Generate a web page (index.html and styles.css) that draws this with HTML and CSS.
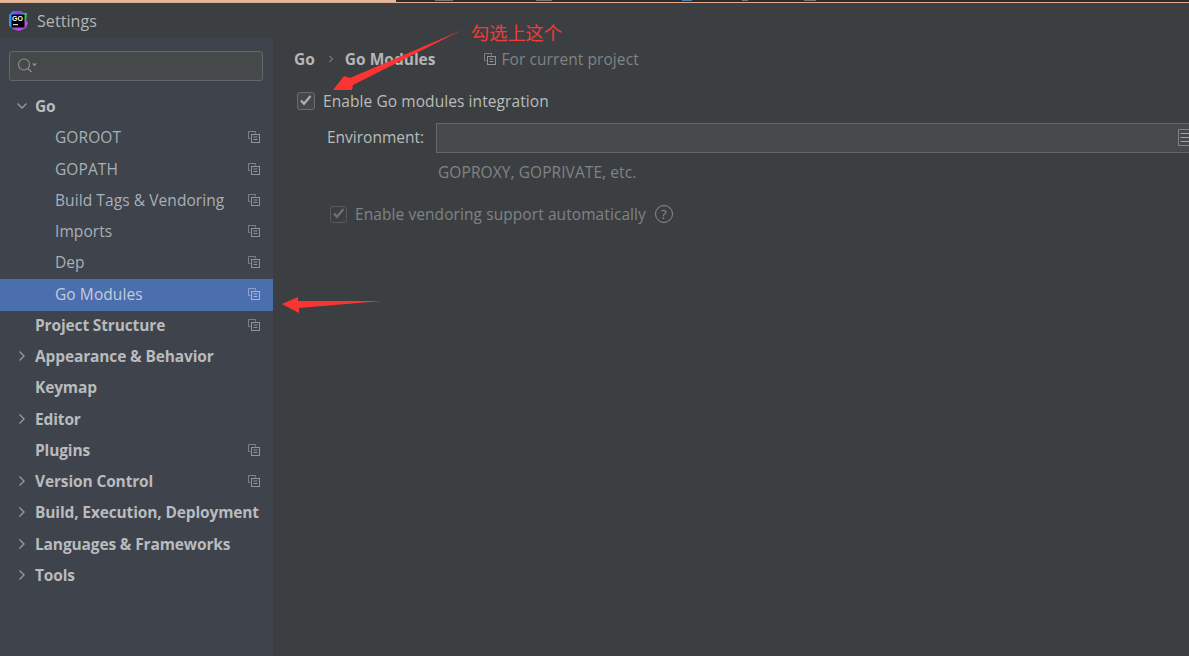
FILE: index.html
```html
<!DOCTYPE html>
<html lang="en">
<head>
<meta charset="utf-8">
<title>Settings</title>
<link rel="stylesheet" href="styles.css">
</head>
<body>
<svg width="0" height="0" class="defs">
  <symbol id="copy" viewBox="0 0 12 12">
    <path d="M7.500 2.500V.5H.5v7h2" fill="none" stroke="currentColor" stroke-opacity=".75"/>
    <rect x="3.500" y="3.500" width="8" height="8" fill="none" stroke="currentColor"/>
    <path d="M5.500 6h4M5.500 8.500h4" stroke="currentColor"/>
  </symbol>
  <symbol id="chev-d" viewBox="0 0 12 12"><path d="M1.500 3.500 6 8l4.500-4.500" fill="none" stroke="currentColor" stroke-width="1.300"/></symbol>
  <symbol id="chev-r" viewBox="0 0 12 12"><path d="M3.500 1.500 8 6l-4.500 4.500" fill="none" stroke="currentColor" stroke-width="1.300"/></symbol>
</svg>
<div class="topstrip"><div class="peach"></div><div class="dark"></div></div>
<header class="titlebar">
  <svg class="logo" width="20" height="20" viewBox="0 0 20 20">
    <path d="M5 0h9l2 4-2 5H6z" fill="#7b4bf0"/>
    <path d="M1 4l4-4 3 9-3 9-4-3z" fill="#2f9be8"/>
    <path d="M14 2h5l-1 8-3 2z" fill="#2fc46e"/>
    <path d="M18 9l2 3-2 5-7 3-7-2z" fill="#b44be0"/>
    <rect x="3.500" y="3.500" width="13" height="13" fill="#000"/>
    <text x="4" y="9.500" class="logo-text">GO</text>
    <rect x="5" y="13" width="5" height="1.200" fill="#ddd"/>
  </svg>
  <span class="title">Settings</span>
</header>
<div class="body">
  <aside class="sidebar">
    <div class="search">
      <svg width="22" height="16" viewBox="0 0 22 16">
        <circle cx="7" cy="6.500" r="5.500" fill="none" stroke="#8b8f92" stroke-width="1.100"/>
        <path d="M11 10.500l3.500 3.500" stroke="#8b8f92" stroke-width="1.300"/>
        <path d="M15 5.500h5l-2.500 3z" fill="#8b8f92"/>
      </svg>
    </div>
    <nav class="tree">
      <div class="row bold"><svg class="arrow"><use href="#chev-d"/></svg><span>Go</span></div>
      <div class="row child"><span>GOROOT</span><svg class="copy"><use href="#copy"/></svg></div>
      <div class="row child"><span>GOPATH</span><svg class="copy"><use href="#copy"/></svg></div>
      <div class="row child"><span>Build Tags &amp; Vendoring</span><svg class="copy"><use href="#copy"/></svg></div>
      <div class="row child"><span>Imports</span><svg class="copy"><use href="#copy"/></svg></div>
      <div class="row child"><span>Dep</span><svg class="copy"><use href="#copy"/></svg></div>
      <div class="row child selected"><span>Go Modules</span><svg class="copy"><use href="#copy"/></svg></div>
      <div class="row bold leaf"><span>Project Structure</span><svg class="copy"><use href="#copy"/></svg></div>
      <div class="row bold"><svg class="arrow"><use href="#chev-r"/></svg><span>Appearance &amp; Behavior</span></div>
      <div class="row bold leaf"><span>Keymap</span></div>
      <div class="row bold"><svg class="arrow"><use href="#chev-r"/></svg><span>Editor</span></div>
      <div class="row bold leaf"><span>Plugins</span><svg class="copy"><use href="#copy"/></svg></div>
      <div class="row bold"><svg class="arrow"><use href="#chev-r"/></svg><span>Version Control</span><svg class="copy"><use href="#copy"/></svg></div>
      <div class="row bold"><svg class="arrow"><use href="#chev-r"/></svg><span>Build, Execution, Deployment</span></div>
      <div class="row bold"><svg class="arrow"><use href="#chev-r"/></svg><span>Languages &amp; Frameworks</span></div>
      <div class="row bold"><svg class="arrow"><use href="#chev-r"/></svg><span>Tools</span></div>
    </nav>
  </aside>
  <main class="main">
    <div class="crumbs">
      <span class="crumb">Go</span>
      <svg class="sep" viewBox="0 0 6 8"><path d="M1.500 1 4.500 4l-3 3" fill="none" stroke="currentColor"/></svg>
      <span class="crumb">Go Modules</span>
      <svg class="copy project-icon"><use href="#copy"/></svg>
      <span class="project">For current project</span>
    </div>
    <label class="check-row first-check">
      <span class="box"><svg width="12" height="12" viewBox="0 0 12 12"><path d="M1 5.500 4 8.800l6.500-7.800" fill="none" stroke="#afb1b3" stroke-width="2.200"/></svg></span>
      <span>Enable Go modules integration</span>
    </label>
    <div class="env">
      <span class="env-label">Environment:</span>
      <div class="env-input"><svg class="env-icon" viewBox="0 0 11 17"><rect x=".5" y=".5" width="20" height="16" fill="none" stroke="#7f8487"/><path d="M2.500 4.500h16M2.500 8.500h16M2.500 12.500h16" stroke="#a0a4a6"/></svg></div>
    </div>
    <div class="hint">GOPROXY, GOPRIVATE, etc.</div>
    <label class="check-row vendoring">
      <span class="box disabled"><svg width="12" height="12" viewBox="0 0 12 12"><path d="M1 5.500 4 8.800l6.500-7.800" fill="none" stroke="#6f7274" stroke-width="2.200"/></svg></span>
      <span>Enable vendoring support automatically</span>
      <span class="help">?</span>
    </label>
  </main>
</div>
<svg class="annot arrow-one" width="135" height="64" viewBox="0 0 135 64">
  <path d="M132 2 20 50l-6-2L3 62h19l1-5z" fill="#fb3333"/>
</svg>
<svg class="annot arrow-two" width="102" height="18" viewBox="0 0 102 18">
  <path d="M0 8 16 1v4h84L17 12v5z" fill="#fb3333"/>
</svg>
<span class="annot note">勾选上这个</span>
</body>
</html>
```
FILE: styles.css
```css
* { box-sizing: border-box; }
html, body { margin: 0; height: 100%; overflow: hidden; }
body {
  width: 1189px;
  height: 656px;
  display: flex;
  flex-direction: column;
  position: relative;
  background: #3c3f41;
  color: #bbbbbb;
  font: 15.5px/20px "Open Sans", "Noto Sans", sans-serif;
  letter-spacing: .08px;
}
.defs { position: absolute; }
.topstrip { height: 3px; display: flex; background: #e2a98c; flex: none; }
.peach { width: 396px; height: 2px; background: #dfb9a0; }
.dark {
  flex: 1;
  height: 2px;
  background-color: #2b2b2d;
  background-repeat: no-repeat;
  background-image:
    linear-gradient(#77797b, #77797b),
    linear-gradient(#77797b, #77797b),
    linear-gradient(#4f86ae, #4f86ae),
    linear-gradient(#77797b, #77797b),
    linear-gradient(#77797b, #77797b);
  background-size: 18px 1px, 16px 1px, 10px 1px, 6px 1px, 12px 1px;
  background-position: 39px 0, 140px 0, 286px 0, 346px 0, 408px 0;
}
.titlebar {
  height: 35px;
  flex: none;
  display: flex;
  align-items: center;
  padding-left: 8px;
  gap: 9px;
  background: #3c3f41;
}
.title { font-size: 16px; color: #b4b6b8; }
.logo-text { font: 700 7px "Liberation Sans", sans-serif; fill: #fff; letter-spacing: 0; }
.body { flex: 1; display: flex; min-height: 0; }
.sidebar {
  width: 273px;
  flex: none;
  background: #3e434c;
  padding: 13px 0 0;
}
.search {
  margin: 0 10px 0 9px;
  height: 30px;
  background: #45494a;
  border: 1px solid #63676a;
  border-radius: 3px;
  display: flex;
  align-items: center;
  padding-left: 7px;
}
.tree { margin-top: 10px; }
.row {
  height: 31.25px;
  display: flex;
  align-items: center;
  position: relative;
  padding: 0 0 1px 35px;
  color: #bbbbbb;
  white-space: nowrap;
}
.bold { font-weight: 700; color: #b9bbbd; letter-spacing: -.14px; }
.child { padding-left: 55px; color: #a9b0b6; }
.selected { background: #4b6eaf; color: #c3ccd8; box-shadow: 0 1px 0 #4b6eaf; }
.arrow {
  position: absolute;
  left: 16px;
  top: 9px;
  width: 12px;
  height: 12px;
  color: #9a9da0;
}
.copy { width: 12px; height: 12px; color: #8e9499; }
.row .copy { position: absolute; left: 248px; top: 9px; }
.selected .copy { color: #a5b4cd; }
.main { flex: 1; min-width: 0; padding: 10px 0 0 21px; color: #bbbbbb; }
.crumbs { display: flex; align-items: center; height: 22px; }
.crumb { font-weight: 700; color: #b4b6b8; letter-spacing: 0; }
.sep { width: 6px; height: 8px; margin: 0 11px 0 13px; color: #9a9da0; }
.project-icon { margin-left: 49px; }
.project { margin-left: 5px; color: #7f8386; }
.check-row { display: flex; align-items: center; height: 24px; }
.first-check { margin: 19px 0 0 3px; }
.box {
  width: 18px;
  height: 18px;
  margin-right: 8px;
  background: #44484a;
  border: 1px solid #6b6e70;
  border-radius: 3px;
  display: flex;
  align-items: center;
  justify-content: center;
}
.env {
  display: flex;
  align-items: center;
  height: 30px;
  margin-top: 10px;
}
.env-label { margin: 0 0 2px 33px; width: 109px; color: #bbbbbb; letter-spacing: 0; }
.env-input {
  flex: 1;
  height: 30px;
  background: #45494a;
  border: 1px solid #63676a;
  border-right: 0;
  position: relative;
}
.env-icon { position: absolute; right: 0; top: 5px; width: 11px; height: 17px; }
.hint { margin: 9px 0 0 144px; color: #7f8386; }
.vendoring { margin: 20px 0 0 36px; color: #7f8386; }
.box.disabled { width: 17px; height: 17px; background: #3c3f41; border-color: #585b5d; }
.help {
  width: 18px;
  height: 18px;
  margin-left: 9px;
  border: 1px solid #8a8d8f;
  border-radius: 50%;
  font-size: 13px;
  line-height: 16px;
  text-align: center;
  color: #8a8d8f;
}
.annot { position: absolute; }
.arrow-one { left: 330px; top: 28px; }
.arrow-two { left: 282px; top: 296px; }
.note {
  left: 471px;
  top: 20px;
  color: #f23a3a;
  letter-spacing: 0;
  font: 18.200px/24px "Noto Sans CJK SC", sans-serif;
}
```
